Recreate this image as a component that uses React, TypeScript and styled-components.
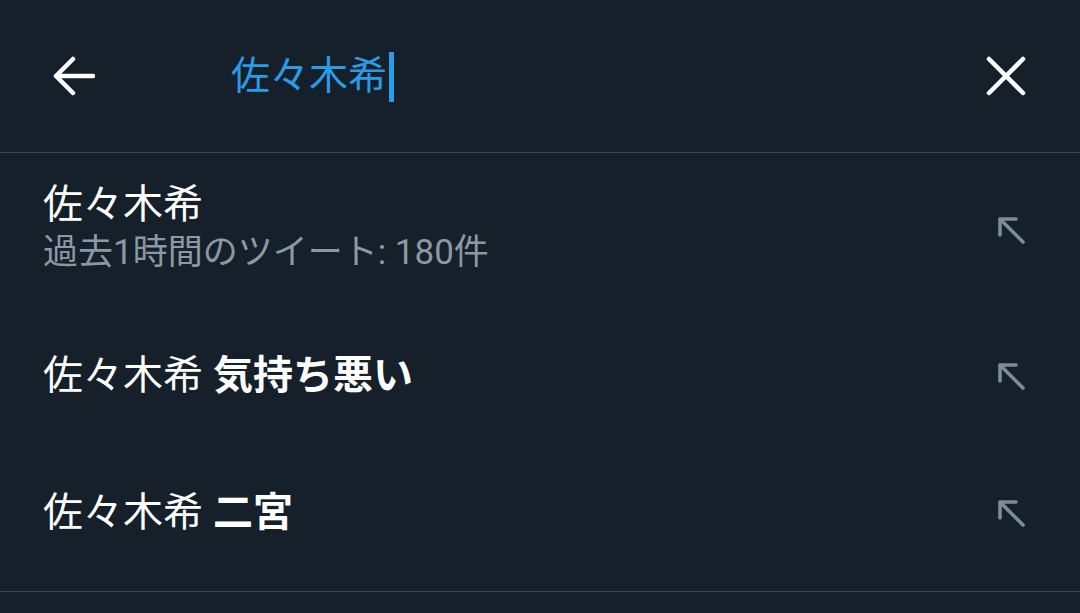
import React from 'react';
import styled, { createGlobalStyle } from 'styled-components';

const GlobalStyle = createGlobalStyle`
	html, body {
		margin: 0;
		padding: 0;
		background: #15202b;
	}
	body {
		font-family: Roboto, 'Noto Sans CJK JP', 'Noto Sans', sans-serif;
		color: #ffffff;
	}
`;

const Screen = styled.div`
	width: 1080px;
	height: 613px;
	background: #15202b;
	overflow: hidden;
`;

const Header = styled.header`
	height: 152px;
	display: flex;
	align-items: center;
	padding: 0 54px 0 53px;
	border-bottom: 1px solid #38444d;
	box-sizing: content-box;
`;

const IconButton = styled.button`
	display: flex;
	align-items: center;
	justify-content: center;
	padding: 0;
	border: 0;
	background: none;
	cursor: pointer;
`;

const Query = styled.div`
	flex: 1;
	display: flex;
	align-items: center;
	margin-left: 136px;
	font-size: 39px;
	line-height: 1;
	color: #2a9be6;
`;

const Caret = styled.span`
	display: inline-block;
	width: 5px;
	height: 50px;
	margin: 2px 0 0 2px;
	background: #2a9be6;
`;

const List = styled.ul`
	list-style: none;
	margin: 0;
	padding: 0 0 10px;
	border-bottom: 1px solid #38444d;
`;

const Row = styled.li<{ $height: number }>`
	height: ${(p) => p.$height}px;
	display: flex;
	align-items: center;
	padding: 0 53px 0 43px;
`;

const RowText = styled.div<{ $lift: number }>`
	flex: 1;
	display: flex;
	flex-direction: column;
	padding-bottom: ${(p) => p.$lift}px;
`;

const Title = styled.div`
	font-size: 40px;
	line-height: 48px;
	color: #ffffff;
	white-space: pre;
`;

const Strong = styled.span`
	font-weight: 700;
`;

const Meta = styled.div`
	margin-top: 2px;
	font-size: 35px;
	line-height: 44px;
	color: #8b98a5;
`;

const BackIcon = () => (
	<svg width="42" height="42" viewBox="0 0 42 42" fill="none" stroke="#ffffff" strokeWidth="4.5" strokeLinecap="round" strokeLinejoin="round">
		<path d="M3 21 H40 M20 4 L3 21 L20 38" />
	</svg>
);

const CloseIcon = () => (
	<svg width="40" height="40" viewBox="0 0 40 40" fill="none" stroke="#ffffff" strokeWidth="4.5" strokeLinecap="round">
		<path d="M3 3 L37 37 M37 3 L3 37" />
	</svg>
);

const FillIcon = () => (
	<svg width="32" height="32" viewBox="0 0 32 32" fill="none" stroke="#7d8b99" strokeWidth="3.6" strokeLinecap="round" strokeLinejoin="round">
		<path d="M5 5 L28 28 M5 21 V5 H21" />
	</svg>
);

const suggestions = [
	{ base: '佐々木希', extra: '', meta: '過去1時間のツイート: 180件', height: 154, lift: 4 },
	{ base: '佐々木希', extra: '気持ち悪い', meta: '', height: 137, lift: 0 },
	{ base: '佐々木希', extra: '二宮', meta: '', height: 137, lift: 0 },
];

const App: React.FC = () => {
	return (
		<Screen>
			<GlobalStyle />
			<Header>
				<IconButton aria-label="戻る">
					<BackIcon />
				</IconButton>
				<Query>
					佐々木希
					<Caret />
				</Query>
				<IconButton aria-label="クリア">
					<CloseIcon />
				</IconButton>
			</Header>
			<List>
				{suggestions.map((s, i) => (
					<Row key={i} $height={s.height}>
						<RowText $lift={s.lift}>
							<Title>
								{s.base}
								{s.extra && ' '}
								{s.extra && <Strong>{s.extra}</Strong>}
							</Title>
							{s.meta && <Meta>{s.meta}</Meta>}
						</RowText>
						<FillIcon />
					</Row>
				))}
			</List>
		</Screen>
	);
};

export default App;
